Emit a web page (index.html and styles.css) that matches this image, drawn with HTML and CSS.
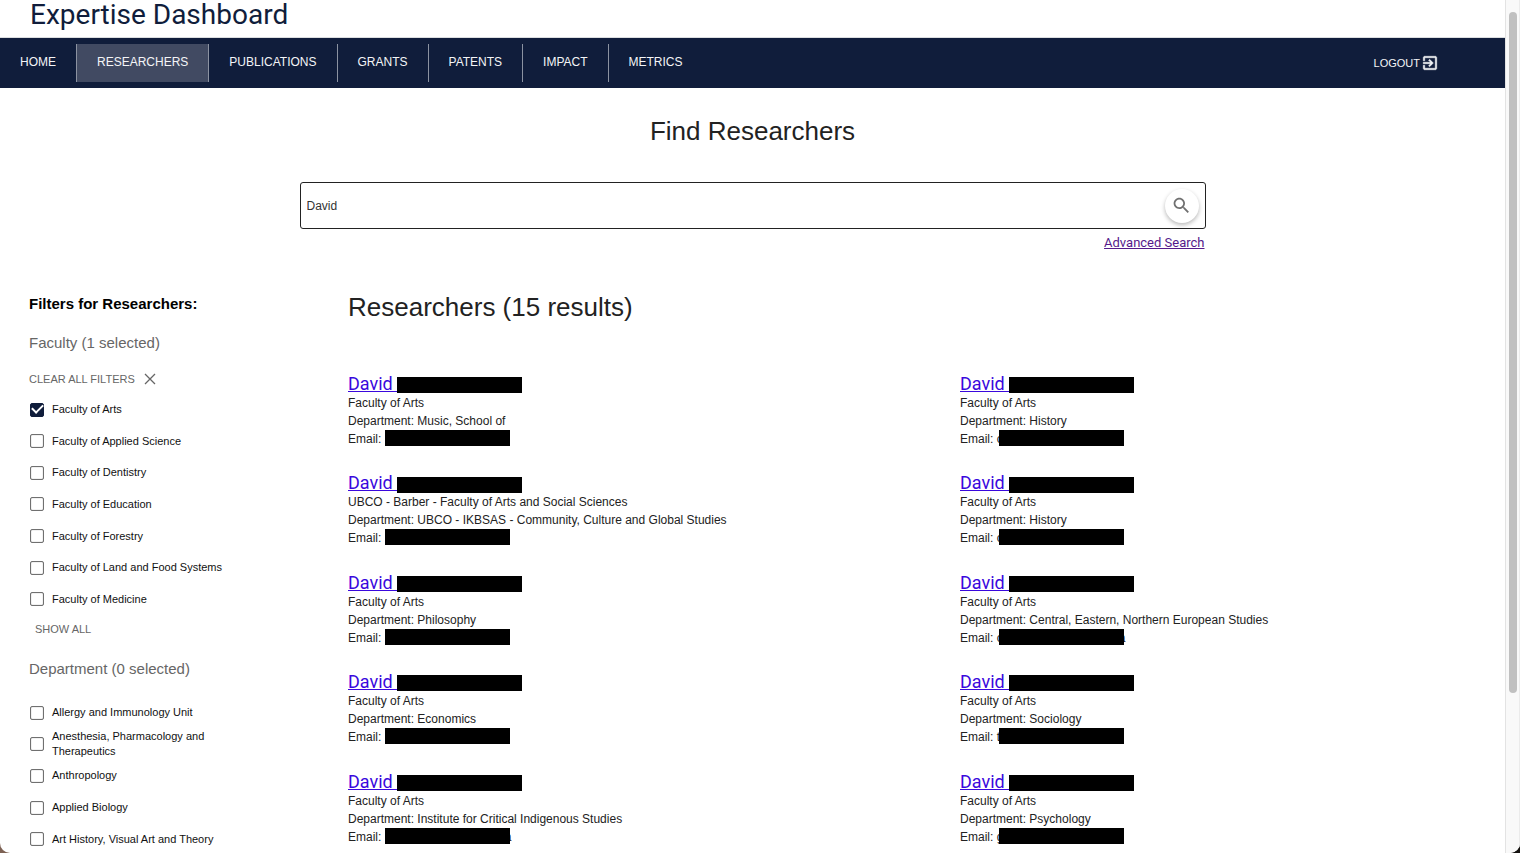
FILE: index.html
```
<!DOCTYPE html>
<html lang="en">
<head>
<meta charset="utf-8">
<meta name="viewport" content="width=device-width, initial-scale=1">
<title>Expertise Dashboard</title>
<link rel="stylesheet" href="styles.css">
</head>
<body>
<div class="window">
  <div class="page">
    <header class="brand">Expertise Dashboard</header>
    <nav class="nav">
      <ul class="nav-list">
        <li><a class="nav-link" href="#">HOME</a></li>
        <li><a class="nav-link active" href="#" aria-current="page">RESEARCHERS</a></li>
        <li><a class="nav-link" href="#">PUBLICATIONS</a></li>
        <li><a class="nav-link" href="#">GRANTS</a></li>
        <li><a class="nav-link" href="#">PATENTS</a></li>
        <li><a class="nav-link" href="#">IMPACT</a></li>
        <li><a class="nav-link" href="#">METRICS</a></li>
      </ul>
      <button class="logout" type="button">LOGOUT
        <svg width="18" height="18" viewBox="0 0 24 24" fill="currentColor" aria-hidden="true"><path d="M19 3H5c-1.11 0-2 .9-2 2v4h2V5h14v14H5v-4H3v4c0 1.1.89 2 2 2h14c1.1 0 2-.9 2-2V5c0-1.1-.9-2-2-2zm-8.92 12.59L11.5 17l5-5-5-5-1.42 1.41L12.67 11H3v2h9.67z" stroke="currentColor" stroke-width="0.6"/></svg>
      </button>
    </nav>

    <section class="search">
      <h1 class="title">Find Researchers</h1>
      <form class="search-form">
        <div class="search-box">
          <input class="search-input" type="text" value="David" aria-label="Search researchers">
          <button class="search-button" type="button" aria-label="Search">
            <svg width="21" height="21" viewBox="0 0 24 24" fill="currentColor" aria-hidden="true"><path d="M15.5 14h-.79l-.28-.27C15.41 12.59 16 11.11 16 9.5 16 5.91 13.09 3 9.5 3S3 5.91 3 9.5 5.91 16 9.5 16c1.61 0 3.09-.59 4.23-1.57l.27.28v.79l5 4.99L20.49 19l-4.99-5zm-6 0C7.01 14 5 11.99 5 9.5S7.01 5 9.5 5 14 7.01 14 9.5 11.99 14 9.5 14z"/></svg>
          </button>
        </div>
        <a class="advanced" href="#">Advanced Search</a>
      </form>
    </section>

    <main class="content">
      <aside class="filters">
        <h2 class="filters-title">Filters for Researchers:</h2>
        <h3 class="group-title">Faculty (1 selected)</h3>
        <button class="text-button clear" type="button">CLEAR ALL FILTERS
          <svg width="12" height="12" viewBox="0 0 12 12" fill="none" stroke="currentColor" stroke-width="1.3" aria-hidden="true"><path d="M1 1l10 10M11 1L1 11"/></svg>
        </button>
        <ul class="options faculties">
          <li><label class="option"><input type="checkbox" checked>Faculty of Arts</label></li>
          <li><label class="option"><input type="checkbox">Faculty of Applied Science</label></li>
          <li><label class="option"><input type="checkbox">Faculty of Dentistry</label></li>
          <li><label class="option"><input type="checkbox">Faculty of Education</label></li>
          <li><label class="option"><input type="checkbox">Faculty of Forestry</label></li>
          <li><label class="option"><input type="checkbox">Faculty of Land and Food Systems</label></li>
          <li><label class="option"><input type="checkbox">Faculty of Medicine</label></li>
        </ul>
        <button class="text-button show-all" type="button">SHOW ALL</button>
        <h3 class="group-title">Department (0 selected)</h3>
        <ul class="options departments">
          <li><label class="option"><input type="checkbox">Allergy and Immunology Unit</label></li>
          <li><label class="option"><input type="checkbox">Anesthesia, Pharmacology and Therapeutics</label></li>
          <li><label class="option"><input type="checkbox">Anthropology</label></li>
          <li><label class="option"><input type="checkbox">Applied Biology</label></li>
          <li><label class="option"><input type="checkbox">Art History, Visual Art and Theory</label></li>
        </ul>
      </aside>

      <section class="results">
        <h2 class="title">Researchers (15 results)</h2>
        <div class="cards">
          <article class="card">
            <a class="name" href="#">David <span class="redacted"></span></a>
            <p>Faculty of Arts</p><p>Department: Music, School of</p>
            <p>Email: <span class="redacted"></span></p>
          </article>
          <article class="card">
            <a class="name" href="#">David <span class="redacted"></span></a>
            <p>Faculty of Arts</p><p>Department: History</p>
            <p>Email: c<span class="redacted over-start"></span></p>
          </article>
          <article class="card">
            <a class="name" href="#">David <span class="redacted"></span></a>
            <p>UBCO - Barber - Faculty of Arts and Social Sciences</p><p>Department: UBCO - IKBSAS - Community, Culture and Global Studies</p>
            <p>Email: <span class="redacted"></span></p>
          </article>
          <article class="card">
            <a class="name" href="#">David <span class="redacted"></span></a>
            <p>Faculty of Arts</p><p>Department: History</p>
            <p>Email: c<span class="redacted over-start"></span></p>
          </article>
          <article class="card">
            <a class="name" href="#">David <span class="redacted"></span></a>
            <p>Faculty of Arts</p><p>Department: Philosophy</p>
            <p>Email: <span class="redacted"></span></p>
          </article>
          <article class="card">
            <a class="name" href="#">David <span class="redacted"></span></a>
            <p>Faculty of Arts</p><p>Department: Central, Eastern, Northern European Studies</p>
            <p>Email: c<span class="redacted over-start over-end"></span>a</p>
          </article>
          <article class="card">
            <a class="name" href="#">David <span class="redacted"></span></a>
            <p>Faculty of Arts</p><p>Department: Economics</p>
            <p>Email: <span class="redacted"></span></p>
          </article>
          <article class="card">
            <a class="name" href="#">David <span class="redacted"></span></a>
            <p>Faculty of Arts</p><p>Department: Sociology</p>
            <p>Email: t<span class="redacted over-narrow"></span></p>
          </article>
          <article class="card">
            <a class="name" href="#">David <span class="redacted"></span></a>
            <p>Faculty of Arts</p><p>Department: Institute for Critical Indigenous Studies</p>
            <p>Email: <span class="redacted over-end"></span>a</p>
          </article>
          <article class="card">
            <a class="name" href="#">David <span class="redacted"></span></a>
            <p>Faculty of Arts</p><p>Department: Psychology</p>
            <p>Email: g<span class="redacted over-start"></span></p>
          </article>
        </div>
      </section>
    </main>
  </div>
  <div class="scrollbar" aria-hidden="true"><div class="thumb"></div></div>
</div>
</body>
</html>
```
FILE: styles.css
```
* { box-sizing: border-box; }

body {
  margin: 0;
  background: linear-gradient(90deg, #7d6254 50%, #14120f 50%);
  color: #222;
  font: 12px/18px "Liberation Sans", Arial, sans-serif;
}

h1, h2, h3, p, ul { margin: 0; padding: 0; }
ul { list-style: none; }
button { border: 0; background: none; font: inherit; cursor: pointer; }

.window {
  display: flex;
  height: 100vh;
  overflow: hidden;
  background: #fff;
  border-radius: 0 0 10px 10px;
}
.page { flex: 1; min-width: 0; }

.brand {
  height: 38px;
  padding-left: 30px;
  border-bottom: 1px solid #dcdee0;
  color: #101d3b;
  font: 28px/30px Roboto, sans-serif;
}

.nav {
  display: flex;
  align-items: center;
  justify-content: space-between;
  height: 50px;
  padding-right: 66px;
  background: #101d3b;
  color: #f4f5f7;
}
.nav-list { display: flex; }
.nav-list li + li { border-left: 1px solid #8b92a1; }
.nav-link {
  display: block;
  padding: 0 20px 2px;
  color: inherit;
  line-height: 36px;
  text-decoration: none;
}
.nav-link.active { background: #414a62; }
.logout {
  display: flex;
  align-items: center;
  gap: 1px;
  padding: 0;
  color: inherit;
  font-size: 11px;
}

.title { color: #222; font-size: 26px; line-height: 32px; font-weight: 400; }
.search { padding-top: 27px; text-align: center; }
.search-form { width: 60.2%; margin: 35px auto 0; text-align: right; }
.search-box {
  display: flex;
  align-items: center;
  height: 47px;
  padding: 0 6px;
  border: 1px solid #222;
  border-radius: 3px;
}
.search-input {
  flex: 1;
  min-width: 0;
  padding: 0;
  border: 0;
  outline: 0;
  color: #333;
  font: inherit;
}
.search-button {
  display: grid;
  place-items: center;
  width: 34px;
  height: 34px;
  padding: 0;
  border-radius: 50%;
  background: #fff;
  color: #707070;
  box-shadow: 0 2px 4px rgba(0, 0, 0, 0.28);
}
.advanced {
  display: inline-block;
  margin: 5px 1px 0 0;
  color: #551a8b;
  font-family: Roboto, sans-serif;
  font-size: 13px;
}

.content {
  display: grid;
  grid-template-columns: 319px 1fr;
  padding: 38px 0 0 29px;
}
.filters { padding-right: 110px; color: #111; }
.filters-title { padding-top: 4px; color: #000; font-size: 15px; line-height: 20px; }
.group-title {
  margin-top: 19px;
  color: #666;
  font-size: 15px;
  line-height: 20px;
  font-weight: 400;
  white-space: nowrap;
}
.text-button { display: flex; align-items: center; padding: 0; color: #666; font-size: 11px; line-height: 16px; white-space: nowrap; }
.clear { gap: 9px; margin-top: 18px; }
.show-all { margin: 6px 0 0 6px; }
.show-all + .group-title { margin-top: 22px; }

.options { display: grid; grid-auto-rows: 1fr; font-size: 11px; line-height: 15px; }
.faculties { min-height: 221px; margin-top: 7px; }
.departments { min-height: 158px; margin-top: 18px; }
.option { display: flex; align-items: center; gap: 8px; height: 100%; }
.option input {
  appearance: none;
  display: grid;
  place-items: center;
  flex: none;
  width: 14px;
  height: 14px;
  margin: 0 0 0 1px;
  border: 1px solid #707070;
  border-radius: 2px;
  background: #fff;
  box-shadow: inset 0 0 1px #707070;
}
.option input:checked { border-color: #101d3b; background: #101d3b; box-shadow: none; }
.option input:checked::after {
  content: "";
  width: 9px;
  height: 5px;
  border: solid #fff;
  border-width: 0 0 2px 2px;
  transform: translateY(-2px) rotate(-45deg);
}

.results .title { padding-top: 1px; }
.cards {
  display: grid;
  grid-template-columns: 1fr 1fr;
  grid-auto-rows: 1fr;
  column-gap: 67px;
  min-height: 497px;
  margin-top: 51px;
}
.name {
  display: block;
  width: fit-content;
  color: #3a08dd;
  font: 18px/20px Roboto, sans-serif;
  white-space: nowrap;
}
.redacted {
  display: inline-block;
  position: relative;
  width: 125px;
  height: 16px;
  background: #000;
  vertical-align: middle;
}
.card p .redacted { vertical-align: text-bottom; }
.over-start { margin-left: -4px; }
.over-narrow { margin-left: -1px; }
.over-end { margin-right: -5px; }

.scrollbar {
  flex: none;
  width: 15px;
  padding: 12px 2px 0 3px;
  border-left: 1px solid #e3e3e3;
  border-right: 1px solid #ebebeb;
  background: #f9f9f9;
}
.thumb { width: 8px; height: 81%; border-radius: 4px; background: #c0c0c0; }
```
